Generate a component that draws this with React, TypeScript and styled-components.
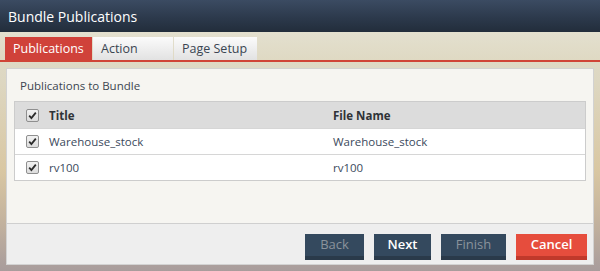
import React from "react";
import styled, { createGlobalStyle } from "styled-components";

const Global = createGlobalStyle`
  html, body { margin: 0; padding: 0; }
  body {
    width: 600px;
    height: 271px;
    overflow: hidden;
    font-family: "Open Sans", "Noto Sans", sans-serif;
    background: linear-gradient(180deg, #e3e0cf 0px, #ddd7c2 80px, #d9c7a2 170px, #c4b39e 220px, #a89c9c 271px);
  }
`;

const Dialog = styled.div`
  width: 600px;
  height: 271px;
  display: flex;
  flex-direction: column;
`;

const TitleBar = styled.div`
  height: 32px;
  flex: none;
  display: flex;
  align-items: center;
  padding-left: 8px;
  color: #ffffff;
  font-size: 14px;
  background: linear-gradient(180deg, #3b4b62 0%, #2b384a 60%, #222d3b 100%);
`;

const TabStrip = styled.div`
  height: 23px;
  flex: none;
  display: flex;
  align-items: flex-end;
  padding: 5px 0 0 5px;
  border-bottom: 2px solid #d04437;
  background: linear-gradient(180deg, #e3e0cf 0%, #dfd9c3 100%);
`;

const Tab = styled.div<{ $active?: boolean; $w: number }>`
  width: ${(p) => p.$w}px;
  height: 23px;
  box-sizing: border-box;
  margin-right: 1px;
  padding-left: 8px;
  display: flex;
  align-items: center;
  font-size: 12.5px;
  color: ${(p) => (p.$active ? "#ffffff" : "#3a4552")};
  background: ${(p) =>
    p.$active ? "#d0423a" : "linear-gradient(180deg, #fbfbfb 0%, #e2e2e2 100%)"};
`;

const Body = styled.div`
  flex: none;
  padding: 6px 6px 0 6px;
`;

const Panel = styled.div`
  height: 197px;
  box-sizing: border-box;
  border: 1px solid #d2d2d2;
  display: flex;
  flex-direction: column;
  background: #f6f5f1;
`;

const Content = styled.div`
  height: 154px;
  flex: none;
  box-sizing: border-box;
  padding: 8px 7px 0 7px;
`;

const Caption = styled.div`
  font-size: 11.5px;
  color: #3c4550;
  padding-left: 6px;
  height: 24px;
  line-height: 18px;
`;

const Table = styled.div`
  border: 1px solid #cccccc;
  display: flex;
  flex-direction: column;
`;

const Row = styled.div<{ $head?: boolean }>`
  height: 25px;
  display: grid;
  grid-template-columns: 34px 284px 1fr;
  align-items: center;
  font-size: 11.5px;
  background: ${(p) => (p.$head ? "#dcdcdc" : "#ffffff")};
  color: ${(p) => (p.$head ? "#2f3337" : "#3b4a5c")};
  font-weight: ${(p) => (p.$head ? 700 : 400)};
  border-top: ${(p) => (p.$head ? "none" : "1px solid #d6d6d6")};
  ${(p) => (p.$head ? "height: 26px;" : "")}
`;

const CheckCell = styled.div`
  display: flex;
  justify-content: center;
  padding-left: 1px;
`;

const Box = styled.div`
  width: 11px;
  height: 11px;
  border: 1px solid #8f8f8f;
  border-radius: 2px;
  background: linear-gradient(180deg, #f2f2f2, #dcdcdc);
  display: flex;
  align-items: center;
  justify-content: center;
`;

const Footer = styled.div`
  flex: 1;
  border-top: 1px solid #cfcfcf;
  background: #eeeeee;
  display: flex;
  justify-content: flex-end;
  align-items: flex-start;
  padding: 10px 6px 0 0;
  gap: 10px;
`;

const Button = styled.div<{ $w: number; $kind: "navy" | "red"; $disabled?: boolean }>`
  width: ${(p) => p.$w}px;
  height: 26px;
  box-sizing: border-box;
  display: flex;
  align-items: center;
  justify-content: center;
  padding-bottom: 2px;
  font-size: 13px;
  font-weight: ${(p) => (p.$disabled ? 400 : 600)};
  color: ${(p) => (p.$disabled ? "#8a939c" : "#ffffff")};
  background: ${(p) => (p.$kind === "red" ? "#e64d3d" : "#34495e")};
  border-bottom: 4px solid ${(p) => (p.$kind === "red" ? "#c0392b" : "#2a3a4a")};
`;

const Check = () => (
  <Box>
    <svg width="9" height="9" viewBox="0 0 9 9">
      <path d="M1.2 4.6 L3.4 7 L7.8 1.6" fill="none" stroke="#2b2b2b" strokeWidth="1.8" />
    </svg>
  </Box>
);

const rows = [
  { title: "Warehouse_stock", file: "Warehouse_stock" },
  { title: "rv100", file: "rv100" },
];

export default function App() {
  return (
    <>
      <Global />
      <Dialog>
        <TitleBar>Bundle Publications</TitleBar>
        <TabStrip>
          <Tab $active $w={87}>Publications</Tab>
          <Tab $w={80}>Action</Tab>
          <Tab $w={83}>Page Setup</Tab>
        </TabStrip>
        <Body>
          <Panel>
            <Content>
              <Caption>Publications to Bundle</Caption>
              <Table>
                <Row $head>
                  <CheckCell><Check /></CheckCell>
                  <div>Title</div>
                  <div>File Name</div>
                </Row>
                {rows.map((r) => (
                  <Row key={r.title}>
                    <CheckCell><Check /></CheckCell>
                    <div>{r.title}</div>
                    <div>{r.file}</div>
                  </Row>
                ))}
              </Table>
            </Content>
            <Footer>
              <Button $w={59} $kind="navy" $disabled>Back</Button>
              <Button $w={57} $kind="navy">Next</Button>
              <Button $w={65} $kind="navy" $disabled>Finish</Button>
              <Button $w={71} $kind="red">Cancel</Button>
            </Footer>
          </Panel>
        </Body>
      </Dialog>
    </>
  );
}
